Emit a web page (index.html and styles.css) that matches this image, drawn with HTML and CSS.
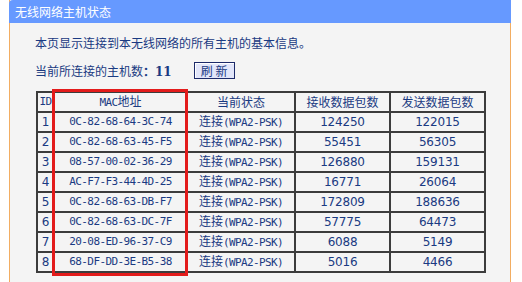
FILE: index.html
```html
<!DOCTYPE html>
<html lang="zh-CN">
<head>
    <meta charset="UTF-8">
    <title>无线网络主机状态</title>
    <link rel="stylesheet" href="styles.css">
</head>
<body>
    <div class="panel">
        <div class="panel-title">无线网络主机状态</div>
        <div class="panel-body">
            <p class="intro">本页显示连接到本无线网络的所有主机的基本信息。</p>
            <div class="count-row">
                <span>当前所连接的主机数<b class="count">：11</b></span>
                <button class="refresh">刷 新</button>
            </div>

            <div class="table-wrap">
                <table class="host-table">
                    <colgroup>
                        <col class="c-id">
                        <col class="c-mac">
                        <col class="c-state">
                        <col class="c-num">
                        <col class="c-num">
                    </colgroup>
                    <tr>
                        <th class="mono">ID</th>
                        <th><span class="mono">MAC</span>地址</th>
                        <th>当前状态</th>
                        <th>接收数据包数</th>
                        <th>发送数据包数</th>
                    </tr>
                    <tr><td class="num">1</td><td class="mono">0C-82-68-64-3C-74</td><td>连接<span class="mono">(WPA2-PSK)</span></td><td class="num">124250</td><td class="num">122015</td></tr>
                    <tr><td class="num">2</td><td class="mono">0C-82-68-63-45-F5</td><td>连接<span class="mono">(WPA2-PSK)</span></td><td class="num">55451</td><td class="num">56305</td></tr>
                    <tr><td class="num">3</td><td class="mono">08-57-00-02-36-29</td><td>连接<span class="mono">(WPA2-PSK)</span></td><td class="num">126880</td><td class="num">159131</td></tr>
                    <tr><td class="num">4</td><td class="mono">AC-F7-F3-44-4D-25</td><td>连接<span class="mono">(WPA2-PSK)</span></td><td class="num">16771</td><td class="num">26064</td></tr>
                    <tr><td class="num">5</td><td class="mono">0C-82-68-63-DB-F7</td><td>连接<span class="mono">(WPA2-PSK)</span></td><td class="num">172809</td><td class="num">188636</td></tr>
                    <tr><td class="num">6</td><td class="mono">0C-82-68-63-DC-7F</td><td>连接<span class="mono">(WPA2-PSK)</span></td><td class="num">57775</td><td class="num">64473</td></tr>
                    <tr><td class="num">7</td><td class="mono">20-08-ED-96-37-C9</td><td>连接<span class="mono">(WPA2-PSK)</span></td><td class="num">6088</td><td class="num">5149</td></tr>
                    <tr><td class="num">8</td><td class="mono">68-DF-DD-3E-B5-38</td><td>连接<span class="mono">(WPA2-PSK)</span></td><td class="num">5016</td><td class="num">4466</td></tr>
                </table>
                <div class="highlight"></div>
            </div>
        </div>
    </div>
</body>
</html>
```

FILE: styles.css
```css
* {
    margin: 0;
    padding: 0;
    box-sizing: border-box;
}

:root {
    --title-blue: #6699ff;
    --text-navy: #1a3a82;
    --panel-bg: #f4f4f4;
    --panel-edge: #f2ad62;
    --grid-line: #3c3c3c;
    --mark-red: #e31b1b;
}

body {
    background: #ffffff;
    font-family: "Noto Sans CJK SC", "DejaVu Sans", sans-serif;
    font-size: 12px;
    color: var(--text-navy);
}

.panel {
    margin-left: 9px;
    width: 502px;
    min-height: 282px;
    background: var(--panel-bg);
    border-left: 1px solid var(--panel-edge);
    border-right: 1px solid var(--panel-edge);
}

.panel-title {
    height: 23px;
    line-height: 23px;
    padding-left: 6px;
    background: var(--title-blue);
    color: #ffffff;
    border-top-left-radius: 4px;
    margin-left: -1px;
    margin-right: -1px;
}

.panel-body {
    padding: 10px 0 0 25px;
}

.intro {
    line-height: 20px;
}

.count-row {
    display: flex;
    align-items: center;
    height: 18px;
    margin-top: 8px;
}

.count {
    font-family: "DejaVu Serif", serif;
    font-weight: bold;
}

.refresh {
    margin-left: 22px;
    width: 41px;
    height: 17px;
    font-family: "Noto Sans CJK SC", sans-serif;
    font-size: 12px;
    line-height: 15px;
    color: var(--text-navy);
    background: #e2e6fa;
    border: 1px solid #1c2a6a;
    box-shadow: inset 1px 1px 0 #ffffff;
}

.table-wrap {
    position: relative;
    margin-top: 12px;
    margin-left: 1px;
    width: 449px;
}

.host-table {
    width: 449px;
    table-layout: fixed;
    border-collapse: collapse;
}

.c-id { width: 17px; }
.c-mac { width: 133px; }
.c-state { width: 108px; }
.c-num { width: 95px; }

.host-table th,
.host-table td {
    height: 18px;
    line-height: 16px;
    padding: 0;
    border: 2px solid var(--grid-line);
    text-align: center;
    font-weight: normal;
    white-space: nowrap;
    overflow: hidden;
}

.mono {
    font-family: "DejaVu Sans Mono", monospace;
    font-size: 11px;
    letter-spacing: -0.6px;
}

.num {
    font-family: "DejaVu Sans", sans-serif;
    font-size: 12px;
    letter-spacing: -0.2px;
}

/* red annotation box drawn over the MAC column */
.highlight {
    position: absolute;
    left: 16px;
    top: -2px;
    width: 136px;
    height: 187px;
    border: 3px solid var(--mark-red);
    pointer-events: none;
}
```
